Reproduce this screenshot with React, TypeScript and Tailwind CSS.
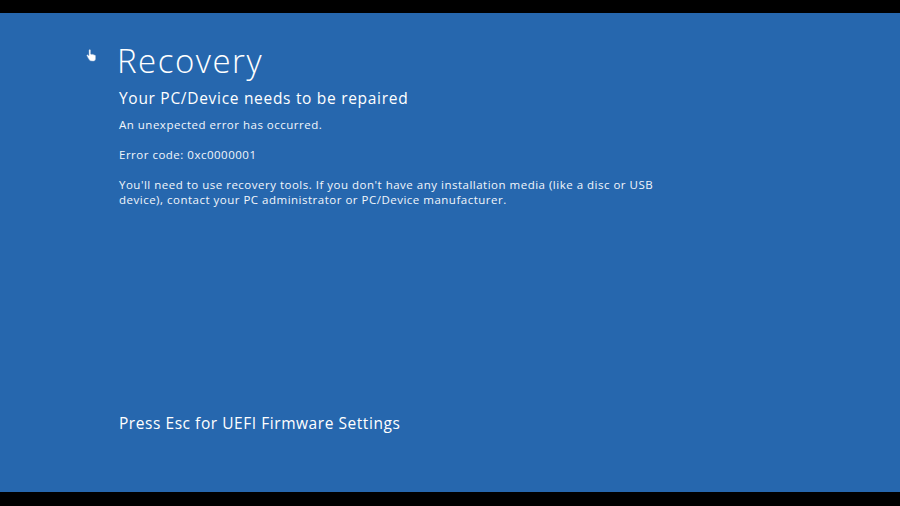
export default function App() {
  return (
    <div className="w-[900px] h-[506px] bg-black flex flex-col" style={{ fontFamily: '"Open Sans", "Noto Sans", sans-serif' }}>
      <div className="h-[13px] bg-black" />
      <div className="flex-1 bg-[#2667ae] text-white flex flex-col pl-[119px] relative">
        {/* cursor */}
        <svg className="absolute left-[86px] top-[36px]" width="10" height="13" viewBox="0 0 10 13">
          <path d="M3 1 L3 7 L2 6 Q1 5.5 0.8 6.5 L3 10.5 Q4 12 6 12 L8 12 Q9.5 11.5 9.5 10 L9.5 7 Q9.5 6 8.5 6 L7.5 6 L7.5 5.5 Q7 5 6 5.5 L5 5.3 L4.5 5 L4.5 1 Q3.8 0 3 1 Z" fill="white" stroke="#9fb8d8" strokeWidth="0.5" />
        </svg>
        <h1 className="text-[33px] leading-[34px] font-light mt-[31px] -ml-[2px] tracking-[1.5px]">Recovery</h1>
        <p className="text-[15.5px] leading-[20px] mt-[10px] tracking-[0.7px]">Your PC/Device needs to be repaired</p>
        <p className="text-[11.5px] leading-[16px] mt-[9px] tracking-[0.5px] text-[#f2f6fb]">An unexpected error has occurred.</p>
        <p className="text-[11.5px] leading-[16px] mt-[14px] tracking-[0.5px] text-[#f2f6fb]">Error code: 0xc0000001</p>
        <p className="text-[11.5px] leading-[15px] mt-[14px] tracking-[0.5px] w-[570px] text-[#f2f6fb]">
          You'll need to use recovery tools. If you don't have any installation media (like a disc or USB device), contact your PC administrator or PC/Device manufacturer.
        </p>
        <p className="text-[15.5px] leading-[20px] mt-auto mb-[59px] tracking-[0.55px]">Press Esc for UEFI Firmware Settings</p>
      </div>
      <div className="h-[14px] bg-black" />
    </div>
  );
}
